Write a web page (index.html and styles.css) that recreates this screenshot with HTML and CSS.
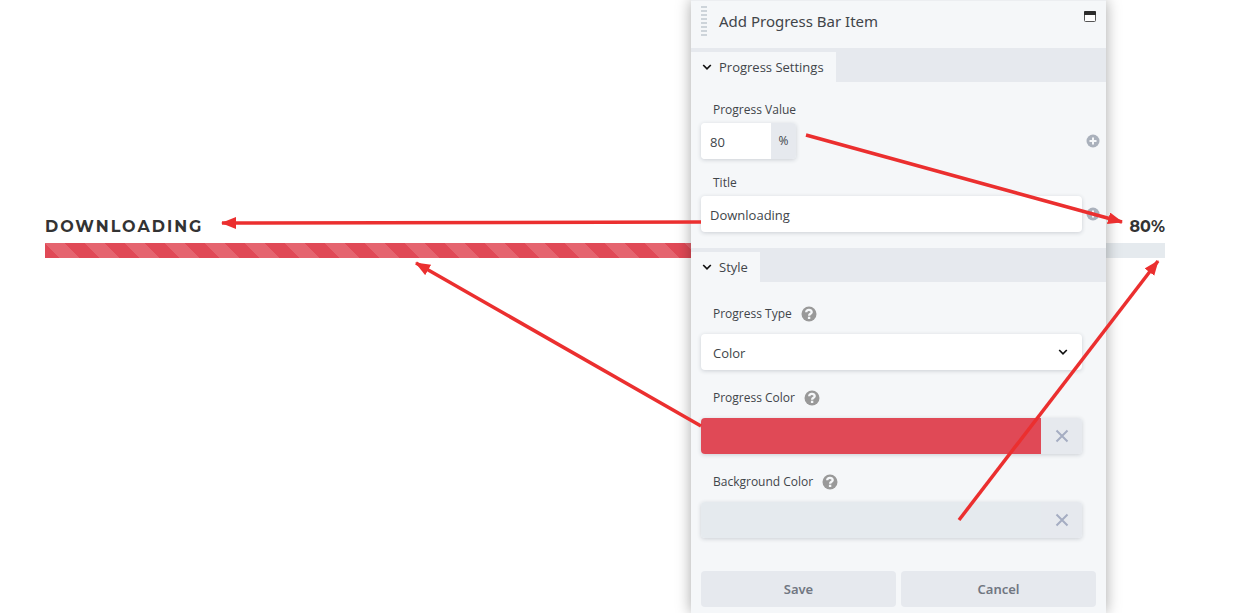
FILE: index.html
```html
<!DOCTYPE html>
<html lang="en">
<head>
<meta charset="utf-8">
<title>Add Progress Bar Item</title>
<link rel="stylesheet" href="styles.css">
</head>
<body>
<svg class="sprite" aria-hidden="true">
  <symbol id="chevron" viewBox="0 0 10 10"><path d="M1.2 3l3.8 3.8L8.800 3" fill="none" stroke="currentColor" stroke-width="1.700"/></symbol>
  <symbol id="plus" viewBox="0 0 14 14"><circle cx="7" cy="7" r="6.500" fill="#aab1bc"/><path d="M7 3.500v7M3.500 7h7" stroke="#f5f7f9" stroke-width="2"/></symbol>
  <symbol id="help" viewBox="0 0 16 16"><circle cx="8" cy="8" r="7.500" fill="#999"/><path d="M5.200 6.300C5.300 3 10.800 3.200 10.700 6.200C10.600 7.900 8.100 7.800 8.100 9.800" fill="none" stroke="#f5f7f9" stroke-width="2.300"/><rect x="6.900" y="10.700" width="2.400" height="2.300" fill="#f5f7f9"/></symbol>
  <symbol id="cross" viewBox="0 0 14 14"><path d="M1.500 1.500l11 11M12.500 1.500l-11 11" stroke="#a5adc2" stroke-width="2"/></symbol>
</svg>

<main class="stage">
  <section class="progress">
    <div class="progress-head">
      <span class="progress-title" id="bar-title">Downloading</span>
      <span class="progress-value">80%</span>
    </div>
    <div class="progress-track" role="progressbar" aria-labelledby="bar-title" aria-valuenow="80">
      <div class="progress-fill" style="width: 80%"></div>
    </div>
  </section>

  <form class="panel">
    <header class="panel-head">
      <span class="grip"></span>
      <h1 class="panel-title">Add Progress Bar Item</h1>
      <button class="icon-button" type="button" aria-label="Maximize">
        <svg width="12" height="11" viewBox="0 0 12 11"><rect x=".5" y=".5" width="11" height="10" rx="1" fill="#fff" stroke="#555"/><path d="M0 1q0-1 1-1h10q1 0 1 1v3H0z" fill="#2d2d2d"/></svg>
      </button>
    </header>

    <div class="section-head">
      <button class="tab" type="button"><svg class="chevron"><use href="#chevron"/></svg>Progress Settings</button>
    </div>
    <div class="fields">
      <div class="field">
        <label class="label" for="value">Progress Value</label>
        <div class="unit-input">
          <input class="input" id="value" type="text" value="80">
          <span class="unit">%</span>
        </div>
        <button class="icon-button dynamic" type="button" aria-label="Dynamic value"><svg width="14" height="14"><use href="#plus"/></svg></button>
      </div>
      <div class="field">
        <label class="label" for="title">Title</label>
        <input class="input raised" id="title" type="text" value="Downloading">
        <button class="icon-button dynamic" type="button" aria-label="Dynamic title"><svg width="14" height="14"><use href="#plus"/></svg></button>
      </div>
    </div>

    <div class="section-head">
      <button class="tab" type="button"><svg class="chevron"><use href="#chevron"/></svg>Style</button>
    </div>
    <div class="fields roomy">
      <div class="field">
        <div class="label-row"><label class="label" for="type">Progress Type</label><svg width="16" height="16"><use href="#help"/></svg></div>
        <div class="select-wrap raised">
          <select class="select" id="type"><option>Color</option></select>
          <svg class="chevron"><use href="#chevron"/></svg>
        </div>
      </div>
      <div class="field">
        <div class="label-row"><label class="label" for="fill">Progress Color</label><svg width="16" height="16"><use href="#help"/></svg></div>
        <div class="color-input raised">
          <button class="swatch swatch-fill" id="fill" type="button"></button>
          <button class="clear" type="button" aria-label="Clear progress color"><svg width="14" height="14"><use href="#cross"/></svg></button>
        </div>
      </div>
      <div class="field">
        <div class="label-row"><label class="label" for="track">Background Color</label><svg width="16" height="16"><use href="#help"/></svg></div>
        <div class="color-input raised">
          <button class="swatch swatch-track" id="track" type="button"></button>
          <button class="clear" type="button" aria-label="Clear background color"><svg width="14" height="14"><use href="#cross"/></svg></button>
        </div>
      </div>
    </div>

    <footer class="actions">
      <button class="action" type="button">Save</button>
      <button class="action" type="button">Cancel</button>
    </footer>
  </form>

  <svg class="arrows" width="1255" height="613" aria-hidden="true">
    <defs>
      <marker id="head" markerUnits="userSpaceOnUse" markerWidth="16" markerHeight="14" refX="14" refY="6" orient="auto"><path d="M0 0L15 6L0 12z" fill="#eb2f2f"/></marker>
    </defs>
    <g stroke="#eb2f2f" stroke-width="3.500">
      <path d="M806 135L1122 222" marker-end="url(#head)"/>
      <path d="M701 222L222 223" marker-end="url(#head)"/>
      <path d="M701 426L416 263" marker-end="url(#head)"/>
      <path d="M959 520L1158 261" marker-end="url(#head)"/>
    </g>
  </svg>
</main>
</body>
</html>
```
FILE: styles.css
```css
* { box-sizing: border-box; }

body {
  margin: 0;
  background: #fff;
  color: #41454a;
  font: 12px/20px "Open Sans", "Noto Sans", sans-serif;
}

button, input, select {
  margin: 0;
  padding: 0;
  border: 0;
  background: none;
  color: inherit;
  font: inherit;
}

svg { display: block; }

.sprite { position: absolute; width: 0; height: 0; }

.stage {
  position: relative;
  min-height: 100vh;
  overflow: hidden;
}

.progress { padding: 217px 90px 0 45px; }

.progress-head {
  display: flex;
  justify-content: space-between;
  margin-bottom: 6px;
  color: #333;
  font: 700 16px/20px Montserrat, Inter, sans-serif;
}

.progress-title {
  letter-spacing: 2px;
  text-transform: uppercase;
}

.progress-track {
  height: 15px;
  background: #e5eaee;
}

.progress-fill {
  height: 100%;
  background: #e04956 linear-gradient(45deg, rgba(255, 255, 255, .15) 25%, transparent 25%, transparent 50%, rgba(255, 255, 255, .15) 50%, rgba(255, 255, 255, .15) 75%, transparent 75%) 0 0 / 40px 40px;
}

.panel {
  position: absolute;
  top: 0;
  left: 691px;
  width: 415px;
  background: #f5f7f9;
  box-shadow: 0 0 14px rgba(0, 0, 0, .35);
}

.panel-head {
  display: flex;
  align-items: flex-start;
  height: 48px;
  padding: 5px 10px;
  border-top: 1px solid #eceef1;
}

.grip {
  width: 6px;
  height: 30px;
  background: repeating-linear-gradient(#cdd4da 0 2px, transparent 2px 4px);
}

.panel-title {
  flex: 1;
  margin: 5px 0 0 12px;
  font-family: "Noto Sans", sans-serif;
  font-size: 15px;
  font-weight: 400;
  line-height: 20px;
}

.icon-button { margin-top: 5px; }

.section-head {
  display: flex;
  height: 34px;
  padding-top: 4px;
  background: #e6e9ee;
}

.tab {
  display: flex;
  align-items: center;
  gap: 7px;
  padding: 0 12px 0 11px;
  background: #f5f7f9;
  font-size: 13px;
}

.chevron {
  width: 10px;
  height: 10px;
  color: #111;
}

.fields {
  display: grid;
  gap: 14px;
  padding: 18px 6px 16px 10px;
}

.field {
  display: grid;
  grid-template-columns: 1fr 14px;
  gap: 3px 4px;
}

.fields.roomy {
  gap: 18px;
  padding-top: 22px;
  padding-bottom: 33px;
}

.roomy .field { row-gap: 10px; }

.field > .label, .label-row { grid-column: 1 / -1; }

.label { padding-left: 12px; }

.label-row {
  display: flex;
  align-items: center;
  gap: 9px;
}

.label-row .label { white-space: nowrap; }

.raised, .unit-input { box-shadow: 0 1px 4px rgba(40, 50, 70, .2); }

.raised, .unit-input, .select, .action { border-radius: 4px; }

.input {
  width: 100%;
  height: 36px;
  padding: 2px 9px 0;
  background: #fff;
  font-size: 13px;
}

.unit-input {
  display: grid;
  grid-template-columns: 70px 25px;
  justify-self: start;
  overflow: hidden;
}

.unit {
  background: #e6e9ee;
  line-height: 36px;
  text-align: center;
}

.dynamic { align-self: center; margin: 0; }

.select-wrap {
  display: grid;
  align-items: center;
  background: #fff;
}

.select-wrap > * { grid-area: 1 / 1; }

.select-wrap .chevron {
  justify-self: end;
  margin-right: 14px;
  pointer-events: none;
}

.select {
  height: 36px;
  padding: 2px 12px 0;
  appearance: none;
  font-size: 13px;
}

.color-input {
  display: grid;
  grid-template-columns: 1fr 41px;
  height: 36px;
  overflow: hidden;
}

.swatch-fill { background: #e04956; }

.swatch-track { background: #e5eaee; }

.clear {
  display: grid;
  place-items: center;
  background: #e6e9ee;
}

.actions {
  display: grid;
  grid-template-columns: 1fr 1fr;
  gap: 5px;
  padding: 0 10px 6px;
}

.action {
  height: 36px;
  background: #e6e9ee;
  color: #717782;
  font-family: "Noto Sans", sans-serif;
  font-size: 13px;
  font-weight: 600;
}

.arrows {
  position: absolute;
  top: 0;
  left: 0;
  pointer-events: none;
}
```
